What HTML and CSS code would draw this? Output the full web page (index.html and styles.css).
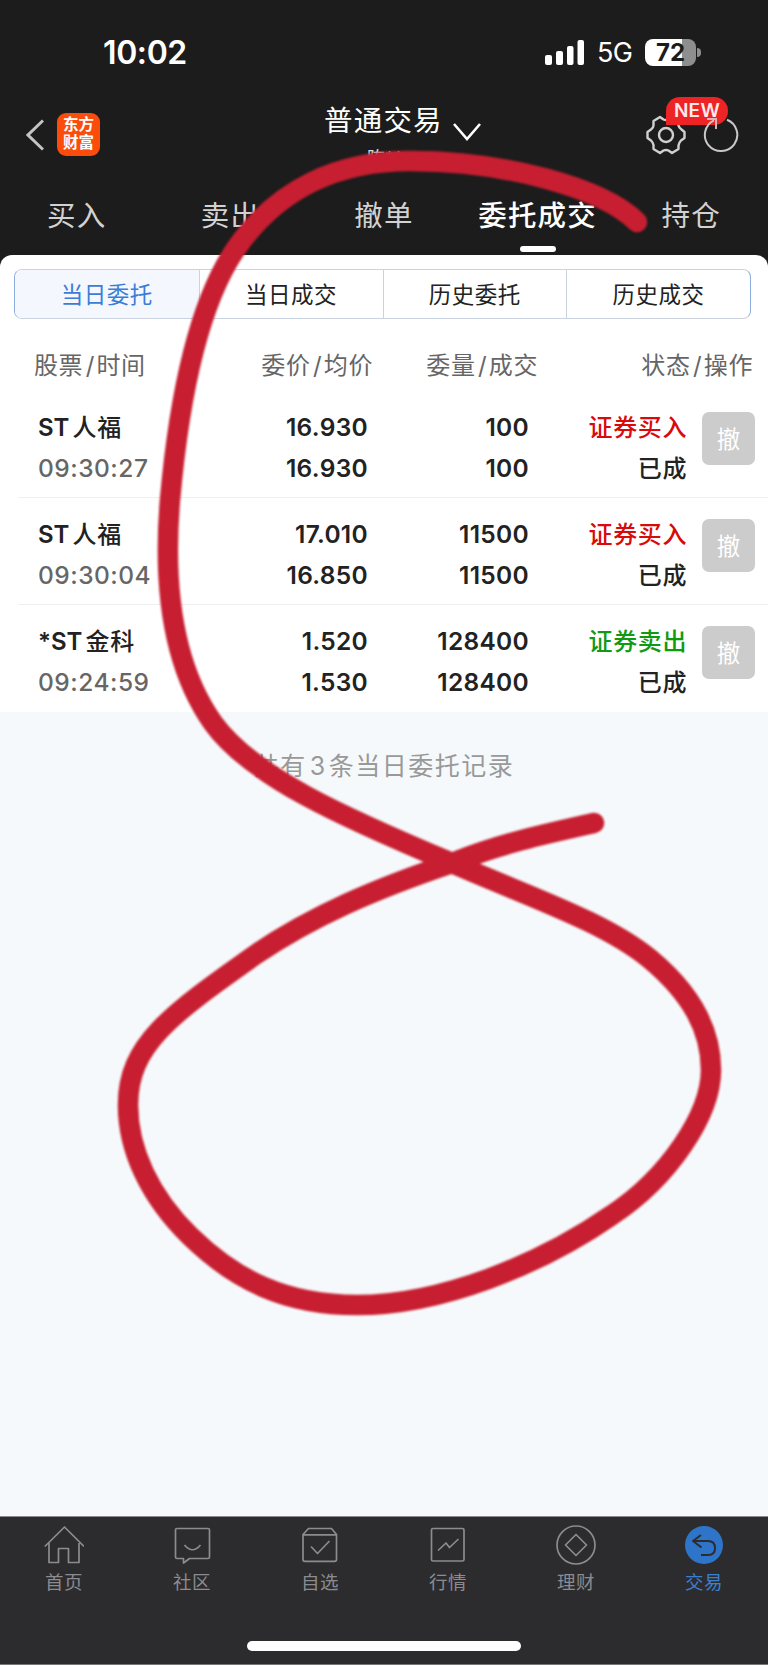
FILE: index.html
```html
<!DOCTYPE html>
<html lang="zh-CN">
<head>
  <meta charset="UTF-8" />
  <meta name="viewport" content="width=device-width, initial-scale=1" />
  <title>普通交易 - 委托成交</title>
  <link rel="stylesheet" href="styles.css">
</head>
<body>
  <div class="page">
    <div class="status-bar">
      <span class="time">10:02</span>
      <div class="status-right">
        <svg width="40" height="25" viewBox="0 0 40 25" fill="#fff">
          <rect x="0" y="15" width="7" height="10" rx="2" />
          <rect x="11" y="11" width="7" height="14" rx="2" />
          <rect x="22" y="6" width="6.5" height="19" rx="2" />
          <rect x="32.5" y="0" width="6.5" height="25" rx="2" />
        </svg>
        <span class="network">5G</span>
        <span class="battery">72</span>
        <span class="battery-tip"></span>
      </div>
    </div>

    <header class="header">
      <div class="header-left">
        <svg width="18" height="32" viewBox="0 0 18 32" fill="none" stroke="#c4c4c4" stroke-width="3">
          <path d="M17 1.5L2 16l15 14.5" />
        </svg>
        <div class="logo"><span>东方</span><span>财富</span></div>
      </div>
      <div class="header-title">
        <div class="title-line">
          <span>普通交易</span>
          <svg width="28" height="18" viewBox="0 0 28 18" fill="none" stroke="#fff" stroke-width="2.6">
            <path d="M1 1l13 15L27 1" />
          </svg>
        </div>
        <div class="account">陈**</div>
      </div>
      <div class="header-right">
        <svg width="40" height="40" viewBox="0 0 40 40" fill="none" stroke="#d0d0d0" stroke-width="2.4" stroke-linejoin="round">
          <path d="M14 2l3.500 2.500q2.500 1 5 0L26 2l6.500 4v4.500q.5 2.500 3 4L38.500 17v6l-3.500 2.500q-2 2-2.500 5V34L26 38l-3.500-2.500q-2.500-1-5 0L14 38l-6.500-4v-4q-.5-2.500-2.500-4.500L1.500 23v-6L5 14.500q2.500-2 2.500-4V6z" />
          <circle cx="20" cy="20" r="7" />
        </svg>
        <svg class="refresh" width="36" height="36" viewBox="0 0 36 36" fill="none" stroke="#d8b4b4" stroke-width="2">
          <path d="M24 2.800A16.200 16.200 0 1 1 11 3.300" stroke="#c8c8c8" />
          <path d="M4 2h9v10" />
        </svg>
        <span class="badge">NEW</span>
      </div>
    </header>

    <nav class="tabs">
      <a>买入</a>
      <a>卖出</a>
      <a>撤单</a>
      <a class="active">委托成交</a>
      <a>持仓</a>
    </nav>

    <main class="panel">
      <div class="segment">
        <a class="active">当日委托</a>
        <a>当日成交</a>
        <a>历史委托</a>
        <a>历史成交</a>
      </div>

      <div class="row row-head">
        <span>股票<i>/</i>时间</span>
        <span>委价<i>/</i>均价</span>
        <span>委量<i>/</i>成交</span>
        <span>状态<i>/</i>操作</span>
      </div>

      <div class="row">
        <div class="stock"><b>ST<i>人福</i></b><span>09:30:27</span></div>
        <div class="num"><span>16.930</span><span>16.930</span></div>
        <div class="num"><span>100</span><span>100</span></div>
        <div class="state"><span class="buy">证券买入</span><span>已成</span></div>
        <button class="cancel">撤</button>
      </div>
      <div class="row">
        <div class="stock"><b>ST<i>人福</i></b><span>09:30:04</span></div>
        <div class="num"><span>17.010</span><span>16.850</span></div>
        <div class="num"><span>11500</span><span>11500</span></div>
        <div class="state"><span class="buy">证券买入</span><span>已成</span></div>
        <button class="cancel">撤</button>
      </div>
      <div class="row">
        <div class="stock"><b>*ST<i>金科</i></b><span>09:24:59</span></div>
        <div class="num"><span>1.520</span><span>1.530</span></div>
        <div class="num"><span>128400</span><span>128400</span></div>
        <div class="state"><span class="sell">证券卖出</span><span>已成</span></div>
        <button class="cancel">撤</button>
      </div>
    </main>

    <p class="summary">共有<span>3</span>条当日委托记录</p>

    <footer class="bottom">
      <nav class="bottom-nav">
        <a>
          <svg width="40" height="40" viewBox="0 0 40 40">
            <path d="M.8 21.500L20.500 2 40 21.500M5 18v19.500h9.500V23.500h10V37.500H35V18" />
          </svg>
          首页
        </a>
        <a>
          <svg width="40" height="40" viewBox="0 0 40 40">
            <path d="M5 3.500h31q1.500 0 1.500 1.500v27q0 1.500-1.500 1.500H17.500l-6 4.500v-4.500H5q-1.500 0-1.500-1.500V5q0-1.500 1.500-1.500zM12.500 20q8 9.500 16 0" />
          </svg>
          社区
        </a>
        <a>
          <svg width="40" height="40" viewBox="0 0 40 40">
            <path d="M3 9.500v25q0 1.800 2 1.800h29.500q2 0 2-1.800v-25L31.500 3.500h-23zM3.500 9.800h33M11 21.500l6.500 7L29.500 16" />
          </svg>
          自选
        </a>
        <a>
          <svg width="40" height="40" viewBox="0 0 40 40">
            <path d="M5 3.500h29.500q1.500 0 1.500 1.500v29.500q0 1.500-1.500 1.500H5q-1.500 0-1.500-1.500V5q0-1.500 1.500-1.500zM10 25.500l8-7.500 3.500 4.500L30.500 14" />
          </svg>
          行情
        </a>
        <a>
          <svg width="40" height="40" viewBox="0 0 40 40">
            <circle cx="20" cy="20" r="19" />
            <path d="M20 9.500L30.500 20 20 30.500 9.500 20z" />
          </svg>
          理财
        </a>
        <a class="active">
          <svg width="40" height="40" viewBox="0 0 40 40">
            <circle class="disc" cx="20" cy="20" r="19" />
            <path d="M17 10L9 16l8.500 6.500M9.500 16H24q7 0 7 7t-7 7h-7" />
          </svg>
          交易
        </a>
      </nav>
      <div class="home-indicator"></div>
    </footer>

    <!-- hand-drawn marker line on top of everything -->
    <svg class="marker" width="768" height="1665" viewBox="0 0 768 1665">
      <path d="M637 222C603 188 505 161 410 161C340 161 278 187 235 250C196 308 178 410 170 500C163 585 172 665 213 723C252 777 345 818 452 863C532 898 605 922 650 959C692 994 711 1030 711 1070C711 1115 668 1178 612 1215C540 1265 440 1305 357 1305C285 1305 235 1280 190 1236C150 1197 128 1150 128 1105C128 1045 170 1015 255 955C312 916 375 889 452 863C500 844 540 835 594 823" />
    </svg>
  </div>
</body>
</html>
```
FILE: styles.css
```css
* { box-sizing: border-box; }
body {
  margin: 0;
  background: #f6f9fb;
  font-family: Inter, "Noto Sans CJK SC", sans-serif;
  color: #222;
}
svg { display: block; }
.page {
  position: relative;
  display: flex;
  flex-direction: column;
  width: 768px;
  height: 1665px;
  overflow: hidden;
  background: linear-gradient(#1c1c1c 300px, #f6f9fb 300px);
}

/* status bar */
.status-bar {
  display: flex;
  justify-content: space-between;
  height: 96px;
  padding: 32px 67px 0 103px;
  color: #fff;
}
.time { padding-top: 1px; font-size: 32px; font-weight: 600; line-height: 40px; letter-spacing: -0.4px; }
.status-right { display: flex; align-items: center; height: 40px; }
.network { margin: 2px 0 0 12px; width: 48px; font-size: 27px; line-height: 36px; letter-spacing: -0.7px; }
.battery {
  width: 51px;
  height: 27px;
  border-radius: 8px;
  background: linear-gradient(90deg, #fff 37px, #8e8e8e 37px);
  color: #1c1c1c;
  font-size: 24px;
  font-weight: 700;
  line-height: 27px;
  text-align: center;
}
.battery-tip { width: 4px; height: 9px; margin-left: 1px; border-radius: 0 4px 4px 0; background: #8e8e8e; }

/* header */
.header { display: grid; grid-template-columns: 1fr 200px 1fr; height: 84px; }
.header-left { display: flex; align-items: center; gap: 13px; height: 77px; padding-left: 26px; }
.logo {
  display: flex;
  flex-direction: column;
  justify-content: center;
  width: 43px;
  height: 43px;
  padding-bottom: 2px;
  border-radius: 9px;
  background: #fb4c0c;
  color: #fff;
  font-size: 15.5px;
  font-weight: 700;
  line-height: 18px;
  text-align: center;
}
.header-title { padding-left: 40px; }
.title-line { display: flex; align-items: flex-start; height: 46px; padding-top: 5px; color: #fff; font-size: 28.5px; line-height: 40px; letter-spacing: 1.2px; white-space: nowrap; }
.title-line svg { margin: 22px 0 0 10px; }
.account { margin: 5px 0 0 43px; color: #ddd; font-size: 18px; line-height: 24px; }
.header-right { position: relative; display: flex; align-items: center; justify-content: flex-end; gap: 17px; height: 78px; padding-right: 29px; }
.refresh { position: relative; z-index: 1; }
.badge {
  position: absolute;
  top: 1px;
  right: 40px;
  width: 62px;
  height: 28px;
  border-radius: 14px 14px 14px 0;
  background: #ee2326;
  color: #ffe9e9;
  font-size: 19px;
  font-weight: 600;
  line-height: 28px;
  letter-spacing: 0.3px;
  text-align: center;
}

/* tabs */
.tabs { display: grid; grid-template-columns: repeat(5, 1fr); height: 75px; padding-top: 15px; }
.tabs a { display: flex; flex-direction: column; align-items: center; color: #d2d2d2; font-size: 28.5px; line-height: 42px; letter-spacing: 1.2px; }
.tabs .active { color: #fff; font-weight: 500; }
.tabs .active::after { content: ""; width: 36px; height: 6px; margin-top: 9px; border-radius: 3px; background: #fff; }

/* order list */
.panel { height: 457px; padding-top: 14px; border-radius: 12px 12px 0 0; background: #fff; }
.segment {
  display: grid;
  grid-template-columns: repeat(4, 1fr);
  width: 737px;
  height: 50px;
  margin-left: 14px;
  border: 1px solid #ccd3e0;
  border-left-color: #8bacdf;
  border-right-color: #8bacdf;
  border-radius: 8px;
  overflow: hidden;
}
.segment a { padding-top: 1px; font-size: 22.5px; line-height: 48px; letter-spacing: 0.5px; text-align: center; }
.segment a + a { border-left: 1px solid #ccd3e0; }
.segment .active { background: #f4f8fe; color: #3b7dd6; }

.row {
  display: grid;
  grid-template-columns: 182px 148px 161px 158px 68px;
  height: 107px;
  margin-left: 18px;
  padding: 16px 0 0 20px;
  border-bottom: 1px solid #f0f0f0;
  font-size: 24.5px;
  font-weight: 600;
  line-height: 41px;
  letter-spacing: 0.3px;
}
.row:last-child { border-bottom: none; }
.row > div { display: flex; flex-direction: column; }
.row-head {
  grid-template-columns: 150px 189px 165px 215px;
  height: 72px;
  padding: 26px 0 0 16px;
  border: none;
  color: #666;
  font-size: 24px;
  font-weight: 400;
  line-height: 41px;
  letter-spacing: 0.6px;
  text-align: right;
  white-space: nowrap;
}
.row-head span:first-child { text-align: left; }
.row-head i { margin: 0 1.5px 0 2.5px; font-style: normal; }
.stock b { font-size: 24px; font-weight: 600; letter-spacing: 0; }
.stock i { margin-left: 3px; font-style: normal; font-weight: 500; letter-spacing: 0.8px; }
.stock span { color: #666; font-weight: 500; letter-spacing: 0.5px; }
.num, .state { align-items: flex-end; }
.state { font-size: 24px; font-weight: 500; letter-spacing: 0.6px; }
.buy { color: #d90a0a; }
.sell { color: #0f9a12; }
.cancel {
  width: 53px;
  height: 53px;
  margin: 5px 0 0 15px;
  padding: 0 0 2px;
  border: none;
  border-radius: 7px;
  background: #ccc;
  color: #fff;
  font: 23.5px "Noto Sans CJK SC", sans-serif;
}

.summary { flex: 1; margin: 0; padding-top: 34px; color: #999; font-size: 25px; line-height: 40px; letter-spacing: 1.5px; text-align: center; }
.summary span { margin: 0 2px 0 3px; }

/* bottom bar */
.bottom { height: 149px; border-top: 1px solid #8b8b8d; border-bottom: 1px solid #777; background: #2c2c2e; }
.bottom-nav { display: grid; grid-template-columns: repeat(6, 1fr); height: 124px; padding-top: 8px; }
.bottom-nav a { display: flex; flex-direction: column; align-items: center; gap: 3px; color: #8b8b90; font-size: 18.5px; line-height: 28px; letter-spacing: 0.6px; }
.bottom-nav svg { fill: none; stroke: #8b8b90; stroke-width: 1.7; stroke-linejoin: round; }
.bottom-nav .active { color: #3b7fd0; }
.bottom-nav .active svg { stroke: #2c2c2e; stroke-width: 2; }
.bottom-nav .disc { fill: #2e75c9; stroke: none; }
.home-indicator { width: 274px; height: 10px; margin: 0 auto; border-radius: 5px; background: #fff; }

.marker { position: absolute; top: 0; left: 0; pointer-events: none; }
.marker path { fill: none; stroke: #c71f31; stroke-width: 20.5; stroke-linecap: round; filter: blur(0.8px); }
```
